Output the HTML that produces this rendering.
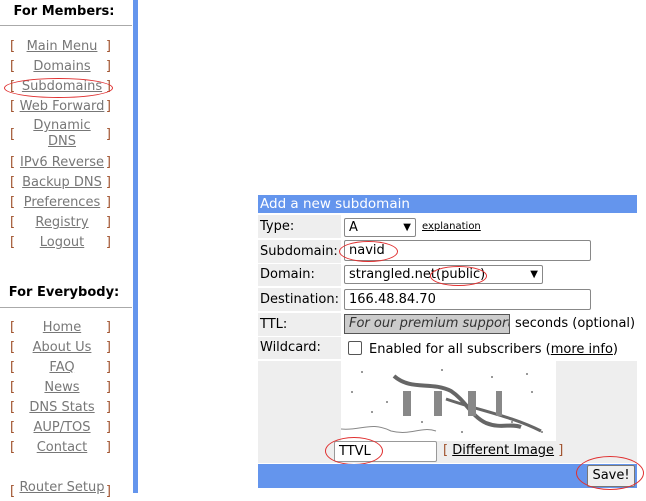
<!DOCTYPE html><html><head><style>
body{margin:0;width:646px;height:493px;background:#fff;position:relative;overflow:hidden;font-family:"DejaVu Sans",Verdana,sans-serif;font-size:13px;color:#000}
.a{position:absolute}
.lk{color:#777;text-decoration:underline}
.br{color:#a0522d}
.row{position:absolute;left:0;width:128px;height:18px;line-height:18px}
.row .l{position:absolute;left:10px}.row .r{position:absolute;right:17px}
.row .t{position:absolute;left:0;width:124px;text-align:center}
.lab{position:absolute;left:258px;width:83px;background:#eee;padding-left:2px;box-sizing:border-box}
.inp{position:absolute;background:#fff;border:1px solid #888;border-radius:2px;box-sizing:border-box;padding-left:4px;line-height:18px}
.ov{position:absolute;border:1px solid #e03030;border-radius:50%}
</style></head><body>
<div class="a" style="left:133px;top:0;width:5px;height:493px;background:#6495ED"></div>
<div class="a" style="left:0;top:4px;width:128px;text-align:center;font-weight:bold;font-size:13px">For Members:</div>
<div class="a" style="left:0;top:25px;width:132px;height:1px;background:#aaa"></div>
<div class="row" style="top:38px"><span class="l br">[</span><span class="t lk">Main Menu</span><span class="r br">]</span></div>
<div class="row" style="top:58px"><span class="l br">[</span><span class="t lk">Domains</span><span class="r br">]</span></div>
<div class="row" style="top:78px"><span class="l br">[</span><span class="t lk">Subdomains</span><span class="r br">]</span></div>
<div class="row" style="top:98px"><span class="l br">[</span><span class="t lk">Web Forward</span><span class="r br">]</span></div>
<div class="row" style="top:126px"><span class="l br">[</span><span class="r br">]</span></div>
<div class="a lk" style="left:0;top:118px;width:124px;text-align:center;line-height:16px">Dynamic<br>DNS</div>
<div class="row" style="top:154px"><span class="l br">[</span><span class="t lk">IPv6 Reverse</span><span class="r br">]</span></div>
<div class="row" style="top:174px"><span class="l br">[</span><span class="t lk">Backup DNS</span><span class="r br">]</span></div>
<div class="row" style="top:194px"><span class="l br">[</span><span class="t lk">Preferences</span><span class="r br">]</span></div>
<div class="row" style="top:214px"><span class="l br">[</span><span class="t lk">Registry</span><span class="r br">]</span></div>
<div class="row" style="top:234px"><span class="l br">[</span><span class="t lk">Logout</span><span class="r br">]</span></div>
<div class="ov" style="left:4px;top:78px;width:107px;height:18px"></div>
<div class="a" style="left:0;top:285px;width:128px;text-align:center;font-weight:bold">For Everybody:</div>
<div class="a" style="left:0;top:307px;width:132px;height:1px;background:#aaa"></div>
<div class="row" style="top:319px"><span class="l br">[</span><span class="t lk">Home</span><span class="r br">]</span></div>
<div class="row" style="top:339px"><span class="l br">[</span><span class="t lk">About Us</span><span class="r br">]</span></div>
<div class="row" style="top:359px"><span class="l br">[</span><span class="t lk">FAQ</span><span class="r br">]</span></div>
<div class="row" style="top:379px"><span class="l br">[</span><span class="t lk">News</span><span class="r br">]</span></div>
<div class="row" style="top:399px"><span class="l br">[</span><span class="t lk">DNS Stats</span><span class="r br">]</span></div>
<div class="row" style="top:419px"><span class="l br">[</span><span class="t lk">AUP/TOS</span><span class="r br">]</span></div>
<div class="row" style="top:439px"><span class="l br">[</span><span class="t lk">Contact</span><span class="r br">]</span></div>
<div class="row" style="top:479px"><span class="l br" style="top:4px">[</span><span class="t lk">Router Setup</span><span class="r br" style="top:4px">]</span></div>

<div class="a" style="left:258px;top:195px;width:379px;height:18px;background:#6495ED;color:#fff;line-height:19px;padding-left:2px;box-sizing:border-box;font-size:13.5px">Add a new subdomain</div>
<div class="lab" style="top:215px;height:23px;line-height:23px">Type:</div>
<div class="inp" style="left:344px;top:218px;width:72px;height:19px">A<span style="position:absolute;right:4px;font-size:10px">&#9660;</span></div>
<div class="a" style="left:422px;top:221px;font-size:10px;text-decoration:underline">explanation</div>
<div class="lab" style="top:240px;height:23px;line-height:23px">Subdomain:</div>
<div class="inp" style="left:344px;top:240px;width:247px;height:21px;line-height:19px">navid</div>
<div class="ov" style="left:339px;top:241px;width:57px;height:19px"></div>
<div class="lab" style="top:264px;height:22px;line-height:22px">Domain:</div>
<div class="inp" style="left:344px;top:265px;width:199px;height:19px;line-height:17px">strangled.net(public)<span style="position:absolute;right:4px;font-size:10px">&#9660;</span></div>
<div class="ov" style="left:430px;top:266px;width:55px;height:18px"></div>
<div class="lab" style="top:288px;height:23px;line-height:23px">Destination:</div>
<div class="inp" style="left:344px;top:289px;width:247px;height:21px;line-height:19px">166.48.84.70</div>
<div class="lab" style="top:313px;height:23px;line-height:23px">TTL:</div>
<div class="a" style="left:344px;top:314px;width:166px;height:20px;background:#ccc;border:1px solid #555;box-sizing:border-box;font-style:italic;color:#333;line-height:18px;padding-left:4px;overflow:hidden;white-space:nowrap">For our premium supporters</div>
<div class="a" style="left:515px;top:316px">seconds (optional)</div>
<div class="lab" style="top:337px;height:22px;line-height:22px">Wildcard:</div>
<div class="a" style="left:348px;top:341px;width:12px;height:12px;border:1px solid #555;border-radius:2px"></div>
<div class="a" style="left:369px;top:342px">Enabled for all subscribers (<u>more info</u>)</div>
<div class="a" style="left:258px;top:361px;width:379px;height:102px;background:#eee"></div>
<svg class="a" style="left:341px;top:361px" width="215" height="80">
<rect width="215" height="80" fill="#fff"/>
<g fill="#999"><rect x="20" y="10" width="2" height="2"/><rect x="60" y="20" width="2" height="2"/><rect x="100" y="8" width="2" height="2"/><rect x="150" y="15" width="2" height="2"/><rect x="190" y="30" width="2" height="2"/><rect x="30" y="50" width="2" height="2"/><rect x="170" y="60" width="2" height="2"/><rect x="200" y="70" width="2" height="2"/><rect x="80" y="60" width="2" height="2"/><rect x="10" y="30" width="2" height="2"/><rect x="45" y="40" width="2" height="2"/><rect x="120" y="70" width="2" height="2"/><rect x="185" y="12" width="2" height="2"/></g>
<path d="M53 15 C70 30,90 20,110 30 C125 40,130 55,145 62 C160 68,170 62,180 66" stroke="#666" stroke-width="4" fill="none"/>
<path d="M105 38 C140 50,170 55,200 70" stroke="#666" stroke-width="3" fill="none"/>
<g fill="#888"><rect x="62" y="30" width="8" height="25"/><rect x="93" y="30" width="8" height="25"/><rect x="127" y="30" width="8" height="25"/><rect x="155" y="30" width="6" height="25"/></g>
<path d="M0 68 C20 70,30 60,50 70 C70 75,80 65,95 70" stroke="#888" fill="none"/>
</svg>
<div class="inp" style="left:334px;top:441px;width:103px;height:21px;line-height:19px;border-color:#999">TTVL</div>
<div class="ov" style="left:325px;top:437px;width:56px;height:26px"></div>
<div class="a" style="left:443px;top:443px"><span class="br">[</span> <u>Different Image</u> <span class="br">]</span></div>
<div class="a" style="left:258px;top:464px;width:379px;height:24px;background:#6495ED"></div>
<div class="a" style="left:587px;top:465px;width:48px;height:22px;background:#efefef;border:1px solid #777;border-radius:2px;box-sizing:border-box;text-align:center;line-height:20px">Save!</div>
<div class="ov" style="left:576px;top:456px;width:66px;height:32px"></div>
</body></html>
